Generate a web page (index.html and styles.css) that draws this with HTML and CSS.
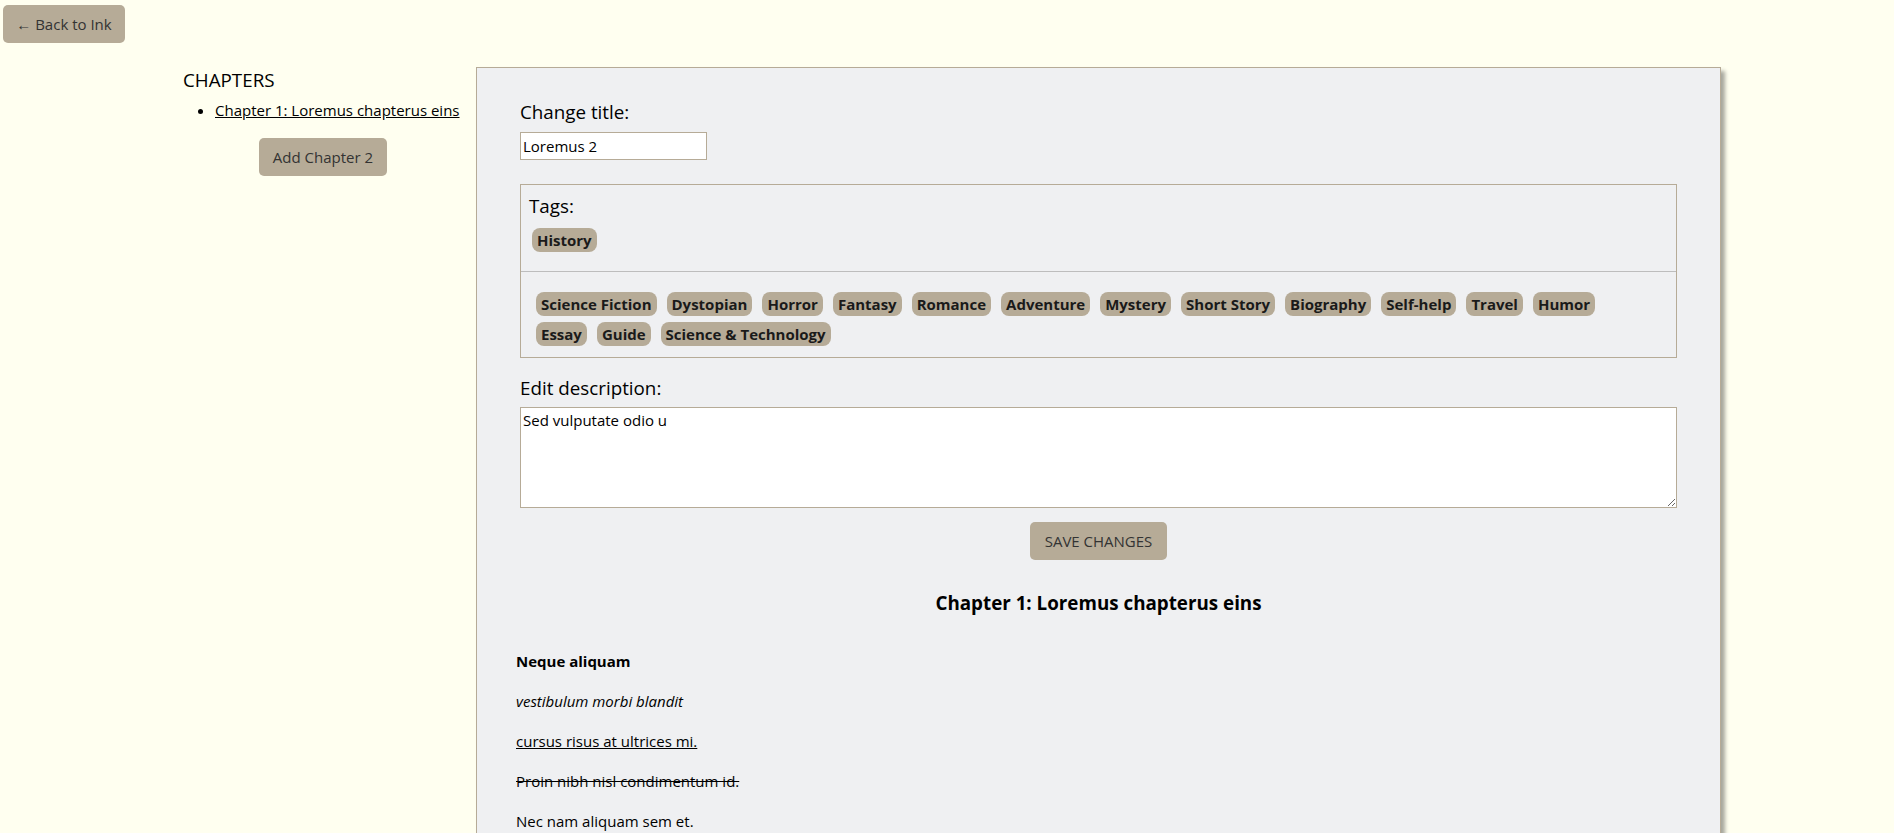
FILE: index.html
```html
<!DOCTYPE html>
<html lang="en">
<head>
<meta charset="utf-8">
<title>Edit Ink</title>
<link rel="stylesheet" href="styles.css">
</head>
<body>
<div class="topbar">
  <a class="btn back-btn" href="#">← Back to Ink</a>
</div>
<div class="layout">
  <aside class="sidebar">
    <h2 class="sidebar-title">CHAPTERS</h2>
    <ul class="chapter-list">
      <li><a href="#">Chapter 1: Loremus chapterus eins</a></li>
    </ul>
    <div class="sidebar-actions">
      <button class="btn">Add Chapter 2</button>
    </div>
  </aside>
  <main class="panel">
    <form class="edit-form">
      <label class="field-label" for="title">Change title:</label>
      <input class="title-input" id="title" type="text" value="Loremus 2">
      <div class="tags-box">
        <div class="tags-selected">
          <div class="field-label tags-label">Tags:</div>
          <div class="pill-row">
            <span class="pill">History</span>
          </div>
        </div>
        <div class="tags-available">
          <span class="pill">Science Fiction</span>
          <span class="pill">Dystopian</span>
          <span class="pill">Horror</span>
          <span class="pill">Fantasy</span>
          <span class="pill">Romance</span>
          <span class="pill">Adventure</span>
          <span class="pill">Mystery</span>
          <span class="pill">Short Story</span>
          <span class="pill">Biography</span>
          <span class="pill">Self-help</span>
          <span class="pill">Travel</span>
          <span class="pill">Humor</span>
          <span class="pill">Essay</span>
          <span class="pill">Guide</span>
          <span class="pill">Science &amp; Technology</span>
        </div>
      </div>
      <label class="field-label desc-label" for="desc">Edit description:</label>
      <textarea class="desc-input" id="desc">Sed vulputate odio u</textarea>
      <div class="form-actions">
        <button type="button" class="btn save-btn">SAVE CHANGES</button>
      </div>
    </form>
    <article class="chapter">
      <h3 class="chapter-title">Chapter 1: Loremus chapterus eins</h3>
      <p><strong>Neque aliquam</strong></p>
      <p><em>vestibulum morbi blandit</em></p>
      <p><u>cursus risus at ultrices mi.</u></p>
      <p><s>Proin nibh nisl condimentum id.</s></p>
      <p>Nec nam aliquam sem et.</p>
    </article>
  </main>
</div>
</body>
</html>
```

FILE: styles.css
```css
html, body {
  margin: 0;
  padding: 0;
  background: #fffff0;
  color: #000;
  font-family: "Open Sans", "Noto Sans", sans-serif;
  font-size: 15px;
}

.topbar {
  padding: 5px 3px 0;
  height: 38px;
}

.btn {
  display: inline-block;
  box-sizing: border-box;
  height: 38px;
  padding: 0 13px;
  line-height: 38px;
  background: #b6ab97;
  color: #333;
  border: none;
  border-radius: 5px;
  font-family: inherit;
  font-size: 15px;
  text-decoration: none;
  cursor: pointer;
}

.back-btn {
  width: 122px;
  text-align: center;
  padding: 0;
}

.layout {
  display: flex;
  gap: 13px;
  margin-top: 24px;
  padding: 0 173px 0 183px;
  align-items: flex-start;
}

.sidebar {
  width: 280px;
  flex: none;
}

.sidebar-title {
  margin: 0;
  font-size: 18.8px;
  font-weight: 500;
  line-height: 27px;
}

.chapter-list {
  margin: 5px 0 0;
  padding-left: 32px;
  line-height: 22px;
}

.chapter-list a {
  color: #000;
  text-decoration: underline;
}

.sidebar-actions {
  display: flex;
  justify-content: center;
  margin-top: 17px;
}

.sidebar-actions .btn {
  width: 128px;
  padding: 0;
}

.panel {
  flex: 1;
  min-height: 800px;
  background: #eff0f2;
  border: 1px solid #b6ab97;
  box-shadow: 4px 4px 4px rgba(0, 0, 0, 0.35);
  padding: 31px 39px 40px;
}

.edit-form {
  display: flex;
  flex-direction: column;
  align-items: flex-start;
  padding: 0 4px;
}

.field-label {
  display: block;
  font-size: 18.8px;
  font-weight: 500;
  line-height: 27px;
}

.title-input {
  box-sizing: border-box;
  width: 187px;
  height: 28px;
  margin: 6px 0 24px;
  padding: 0 2px;
  border: 1px solid #b6ab97;
  background: #fff;
  font-family: inherit;
  font-size: 15px;
  color: #000;
  outline: none;
}

.tags-box {
  align-self: stretch;
  border: 1px solid #b6ab97;
}

.tags-selected {
  padding: 8px 8px 19px;
  border-bottom: 1px solid #bdbdbd;
}

.pill-row {
  display: flex;
  flex-wrap: wrap;
  gap: 6px 10px;
  margin-top: 8px;
  padding-left: 3px;
}

.tags-available {
  display: flex;
  flex-wrap: wrap;
  gap: 6px 10px;
  padding: 20px 40px 11px 15px;
}

.pill {
  display: inline-block;
  height: 24px;
  line-height: 24px;
  padding: 0 5px;
  border-radius: 8px;
  background: #b6ab97;
  color: #1a1a1a;
  font-weight: bold;
  font-size: 15px;
}

.desc-label {
  margin-top: 17px;
}

.desc-input {
  box-sizing: border-box;
  align-self: stretch;
  height: 101px;
  margin-top: 5px;
  padding: 2px;
  border: 1px solid #b6ab97;
  background: #fff;
  font-family: inherit;
  font-size: 15px;
  color: #000;
  outline: none;
}

.form-actions {
  align-self: stretch;
  display: flex;
  justify-content: center;
  margin-top: 14px;
}

.save-btn {
  width: 137px;
  padding: 0;
}

.chapter {
  padding: 0;
}

.chapter-title {
  margin: 30px 0 32px;
  text-align: center;
  font-size: 18.8px;
  line-height: 27px;
  font-weight: bold;
}

.chapter p {
  margin: 0 0 16px;
  line-height: 24px;
}
```
